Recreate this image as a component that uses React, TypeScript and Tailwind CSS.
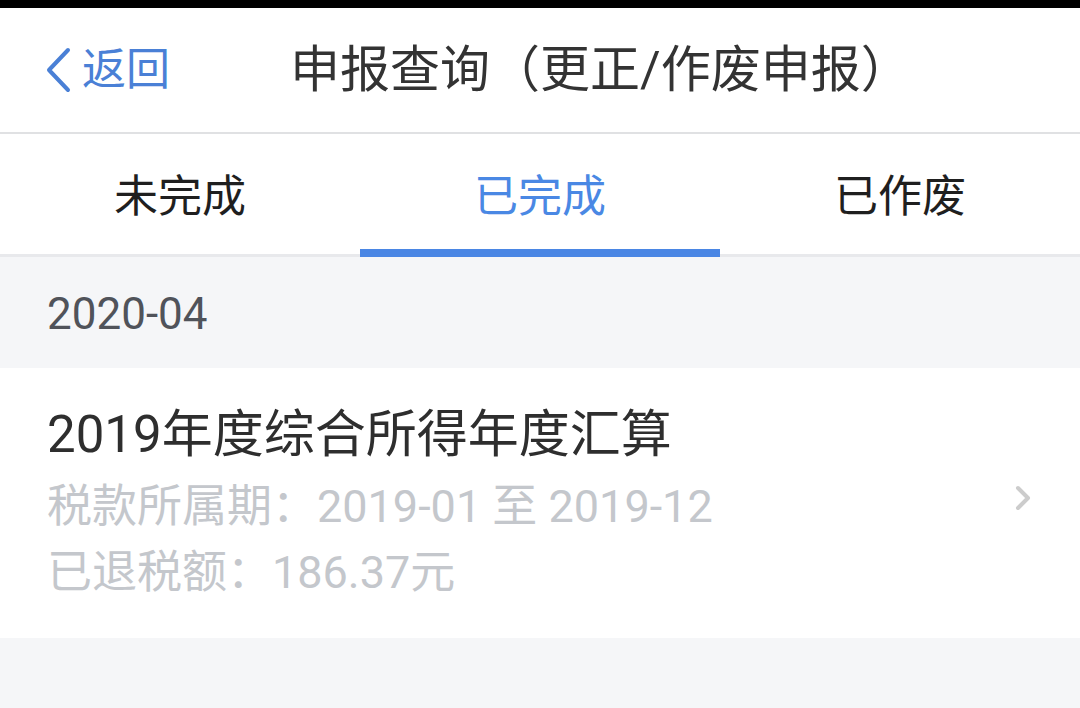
export default function App() {
  const tabs = ["未完成", "已完成", "已作废"];
  const active = 1;

  return (
    <div
      className="w-[1080px] h-[708px] overflow-hidden bg-[#f5f6f8]"
      style={{ fontFamily: 'Roboto, "Noto Sans CJK SC", "Noto Sans", sans-serif' }}
    >
      {/* Status bar strip */}
      <div className="h-[8px] bg-black" />

      {/* Header */}
      <div className="h-[126px] bg-white flex items-center border-b-2 border-[#e0e1e3]">
        <div className="flex items-center pl-[45px] text-[#4a80d6]">
          <svg width="26" height="46" viewBox="0 0 26 46" fill="none">
            <path d="M23 3 L4 23 L23 43" stroke="#4a80d6" strokeWidth="4" strokeLinecap="round" strokeLinejoin="round" />
          </svg>
          <span className="ml-[11px] text-[44px] leading-none">返回</span>
        </div>
        <h1 className="ml-[120px] text-[50px] leading-none text-[#333333] font-normal">
          申报查询（更正/作废申报）
        </h1>
      </div>

      {/* Tabs */}
      <div className="h-[123px] bg-white flex border-b-[3px] border-[#e8e9ec]">
        {tabs.map((t, i) => (
          <div key={t} className="flex-1 relative flex items-center justify-center">
            <span
              className={
                i === active
                  ? "text-[44px] leading-none text-[#4a88e4] mt-[6px]"
                  : "text-[44px] leading-none text-[#1f1f1f] mt-[6px]"
              }
            >
              {t}
            </span>
            {i === active && (
              <div className="absolute left-0 right-0 bottom-[-3px] h-[8px] bg-[#4a86e4]" />
            )}
          </div>
        ))}
      </div>

      {/* Month header */}
      <div className="h-[111px] flex items-center pl-[47px]">
        <span className="text-[44px] leading-none text-[#50535a] mt-[2px]">2020-04</span>
      </div>

      {/* Record card */}
      <div className="h-[270px] bg-white flex items-center">
        <div className="flex-1 flex flex-col pl-[47px] pt-[37px] self-start">
          <div className="text-[51px] leading-[60px] text-[#2e2e2e]">2019年度综合所得年度汇算</div>
          <div className="mt-[9px] text-[45px] leading-[66px] text-[#c4c7cc]">
            税款所属期：2019-01 至 2019-12
          </div>
          <div className="text-[45px] leading-[66px] text-[#c4c7cc]">已退税额：186.37元</div>
        </div>
        <div className="pr-[48px] mt-[-10px]">
          <svg width="18" height="26" viewBox="0 0 18 26" fill="none">
            <path d="M4 3 L14 13 L4 23" stroke="#cccccc" strokeWidth="4" strokeLinecap="round" strokeLinejoin="round" />
          </svg>
        </div>
      </div>
    </div>
  );
}
